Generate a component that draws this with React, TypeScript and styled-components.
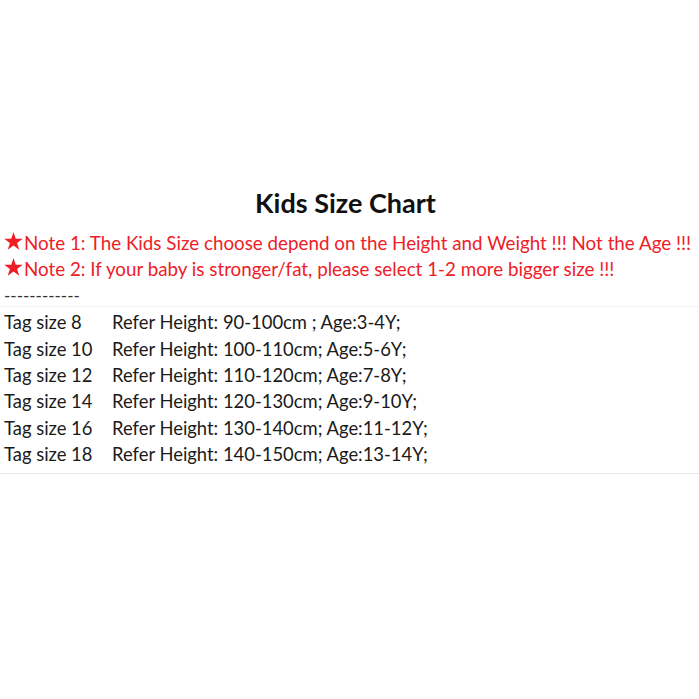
import React from "react";
import styled, { createGlobalStyle } from "styled-components";

const GlobalStyle = createGlobalStyle`
  html, body {
    margin: 0;
    padding: 0;
    background: #ffffff;
  }
  body {
    font-family: Lato, "Open Sans", sans-serif;
  }
`;

const Page = styled.div`
  width: 699px;
  height: 699px;
  display: flex;
  flex-direction: column;
  padding-top: 186px;
  box-sizing: border-box;
`;

const Title = styled.h1`
  margin: 0 0 9px;
  text-align: center;
  font-size: 27px;
  font-weight: 700;
  color: #111;
  line-height: 34px;
  padding-right: 8px;
`;

const Note = styled.div`
  display: flex;
  align-items: center;
  padding-left: 4px;
  height: 26px;
  font-size: 18.8px;
  color: #ee2027;
  white-space: nowrap;
`;

const Star = styled.svg`
  width: 19px;
  height: 18px;
  margin: 0 1px 3px 0;
  flex: none;
`;

const Dashes = styled.div`
  padding: 5px 0 0 4px;
  height: 26px;
  box-sizing: border-box;
  line-height: 20px;
  font-size: 17px;
  color: #333;
  border-bottom: 1px solid #f4f4f4;
`;

const Table = styled.div`
  display: grid;
  grid-template-columns: 108px auto;
  grid-auto-rows: 26.4px;
  align-items: center;
  padding: 2px 0 6px 4px;
  font-size: 18.4px;
  color: #1a1a1a;
  border-bottom: 1px solid #e6e6e6;
`;

const Cell = styled.span`
  white-space: nowrap;
`;

const rows = [
  ["Tag size 8", "Refer Height: 90-100cm ; Age:3-4Y;"],
  ["Tag size 10", "Refer Height: 100-110cm; Age:5-6Y;"],
  ["Tag size 12", "Refer Height: 110-120cm; Age:7-8Y;"],
  ["Tag size 14", "Refer Height: 120-130cm; Age:9-10Y;"],
  ["Tag size 16", "Refer Height: 130-140cm; Age:11-12Y;"],
  ["Tag size 18", "Refer Height: 140-150cm; Age:13-14Y;"],
];

const RedStar = () => (
  <Star viewBox="0 0 20 19">
    <polygon
      points="10,0 12.35,7.1 19.8,7.1 13.75,11.5 16.1,18.7 10,14.3 3.9,18.7 6.25,11.5 0.2,7.1 7.65,7.1"
      fill="#ee1c25"
    />
  </Star>
);

export default function App() {
  return (
    <>
      <GlobalStyle />
      <Page>
        <Title>Kids Size Chart</Title>
        <Note>
          <RedStar />Note 1: The Kids Size choose depend on the Height and Weight !!! Not the Age !!!
        </Note>
        <Note>
          <RedStar />Note 2: If your baby is stronger/fat, please select 1-2 more bigger size !!!
        </Note>
        <Dashes>------------</Dashes>
        <Table>
          {rows.map(([tag, info]) => (
            <React.Fragment key={tag}>
              <Cell>{tag}</Cell>
              <Cell>{info}</Cell>
            </React.Fragment>
          ))}
        </Table>
      </Page>
    </>
  );
}
